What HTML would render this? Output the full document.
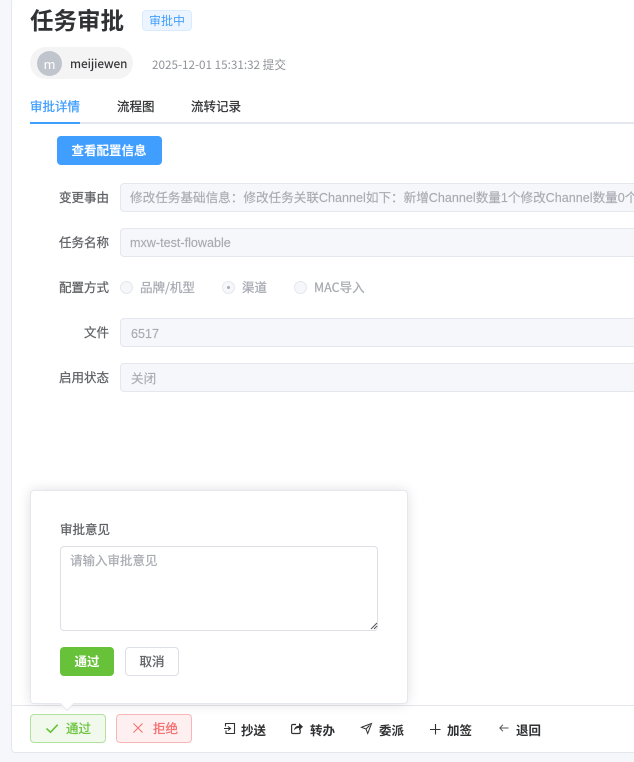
<!DOCTYPE html>
<html lang="zh"><head><meta charset="utf-8">
<style>
*{box-sizing:border-box}
html,body{margin:0;padding:0}
body{width:634px;height:762px;overflow:hidden;background:#f5f7fa;position:relative;font-family:"Noto Sans CJK SC","Liberation Sans",sans-serif;font-size:14px;color:#303133}
.a{position:absolute;white-space:nowrap}
.m{-webkit-text-stroke:.25px currentColor}
.card{left:11px;top:-2px;width:640px;height:755px;background:#fff;border:1px solid #e4e7ed;border-radius:4px}
.lbl{right:525px;font-size:12.5px;line-height:20px;color:#606266;-webkit-text-stroke:.25px #606266}
.inp{left:120px;width:530px;height:29px;background:#f5f7fa;border:1px solid #e4e7ed;border-radius:4px;font:12.6px/28px "Liberation Sans","Noto Sans CJK SC",sans-serif;color:#a8abb2;padding-left:9px;overflow:hidden;-webkit-text-stroke:.15px #a8abb2}
.radio{width:13px;height:13px;border-radius:50%;background:#f5f7fa;border:1px solid #e4e7ed}
.rt{font-size:12.5px;line-height:20px;color:#a8abb2;-webkit-text-stroke:.25px #a8abb2}
.act{font-size:12.5px;line-height:20px;font-weight:700;color:#303133}
svg{position:absolute;overflow:visible;fill:none}
</style></head><body>
<div class="a card"></div>

<div class="a" style="left:30px;top:1px;font-size:23.5px;line-height:36px;font-weight:700;color:#303133">任务审批</div>
<div class="a" style="left:142px;top:10px;width:50px;height:21px;background:#ecf5ff;border:1px solid #d9ecff;border-radius:4px;color:#409eff;font-size:12px;line-height:19px;text-align:center">审批中</div>

<div class="a" style="left:30px;top:47px;width:103px;height:32px;border-radius:16px;background:#f4f4f5"></div>
<div class="a" style="left:37px;top:51px;width:25px;height:25px;border-radius:50%;background:#c0c4cc;color:#fff;font-size:13px;line-height:25px;text-align:center">m</div>
<div class="a" style="left:70px;top:54px;font-size:11.9px;line-height:20px;color:#303133;-webkit-text-stroke:.15px #303133">meijiewen</div>
<div class="a" style="left:152px;top:55px;font-size:11.7px;line-height:20px;color:#909399">2025-12-01 15:31:32 提交</div>

<div class="a m" style="left:30px;top:96px;font-size:12.5px;line-height:20px;color:#409eff">审批详情</div>
<div class="a m" style="left:117px;top:96px;font-size:12.5px;line-height:20px">流程图</div>
<div class="a m" style="left:191px;top:96px;font-size:12.5px;line-height:20px">流转记录</div>
<div class="a" style="left:30px;top:122px;width:610px;height:2px;background:#e4e7ed"></div>
<div class="a" style="left:30px;top:122px;width:50px;height:2px;background:#409eff"></div>

<div class="a" style="left:57px;top:136px;width:105px;height:29px;background:#409eff;border-radius:4px;color:#fff;font-size:12.5px;font-weight:700;line-height:28px;text-align:center;padding-right:1px">查看配置信息</div>

<div class="a lbl" style="top:187px">变更事由</div>
<div class="a inp" style="top:183px">修改任务基础信息：修改任务关联Channel如下：新增Channel数量1个修改Channel数量0个删除Channel数量0个</div>
<div class="a lbl" style="top:232px">任务名称</div>
<div class="a inp" style="top:228px">mxw-test-flowable</div>
<div class="a lbl" style="top:277px">配置方式</div>
<div class="a radio" style="left:120px;top:281px"></div>
<div class="a rt" style="left:140px;top:277px">品牌/机型</div>
<div class="a radio" style="left:222px;top:281px"></div>
<div class="a" style="left:227px;top:286px;width:3px;height:3px;border-radius:50%;background:#a8abb2"></div>
<div class="a rt" style="left:242px;top:277px">渠道</div>
<div class="a radio" style="left:294px;top:281px"></div>
<div class="a rt" style="left:314px;top:277px">MAC导入</div>
<div class="a lbl" style="top:322px">文件</div>
<div class="a inp" style="top:318px;padding-top:1px;padding-left:10px">6517</div>
<div class="a lbl" style="top:367px">启用状态</div>
<div class="a inp" style="top:363px;padding-top:1px;padding-left:10px">关闭</div>

<div class="a" style="left:12px;top:705px;width:630px;height:1px;background:#e4e7ed"></div>

<div class="a" style="left:30px;top:490px;width:378px;height:214px;background:#fff;border:1px solid #e4e7ed;border-radius:4px;box-shadow:0 0 12px rgba(0,0,0,.12)"></div>
<div class="a" style="left:62px;top:699px;width:10px;height:10px;background:#fff;transform:rotate(45deg);border-right:1px solid #e4e7ed;border-bottom:1px solid #e4e7ed"></div>
<div class="a lbl" style="left:60px;right:auto;top:519px">审批意见</div>
<div class="a" style="left:60px;top:546px;width:318px;height:85px;border:1px solid #dcdfe6;border-radius:4px;background:#fff;padding:2px 9px;font-size:12.5px;line-height:21px;color:#a8abb2;-webkit-text-stroke:.2px #a8abb2">请输入审批意见</div>
<svg style="left:370px;top:622px" width="8" height="8"><path d="M1 7 7 1M4 7 7 4" stroke="#555" stroke-width="1"/></svg>
<div class="a" style="left:60px;top:647px;width:54px;height:29px;background:#67c23a;border-radius:4px;color:#fff;font-size:12.5px;font-weight:700;line-height:27px;text-align:center">通过</div>
<div class="a" style="left:125px;top:647px;width:54px;height:29px;background:#fff;border:1px solid #dcdfe6;border-radius:4px;color:#606266;font-size:12.5px;line-height:26px;text-align:center;-webkit-text-stroke:.3px #606266">取消</div>

<div class="a" style="left:30px;top:714px;width:76px;height:29px;background:#f0f9eb;border:1px solid #b3e19d;border-radius:4px"></div>
<svg style="left:46px;top:724px" width="12" height="9"><path d="M.5 4.5 4.5 8.3 11.7.7" stroke="#67c23a" stroke-width="1.6"/></svg>
<div class="a m" style="left:66px;top:718px;font-size:12.5px;line-height:20px;color:#67c23a">通过</div>
<div class="a" style="left:116px;top:714px;width:76px;height:29px;background:#fef0f0;border:1px solid #fab6b6;border-radius:4px"></div>
<svg style="left:133px;top:723px" width="10" height="10"><path d="M.5 .5 9.5 9.5M9.5 .5 .5 9.5" stroke="#f56c6c" stroke-width="1"/></svg>
<div class="a m" style="left:153px;top:718px;font-size:12.5px;line-height:20px;color:#f56c6c">拒绝</div>

<svg style="left:224px;top:723px" width="11" height="11"><path d="M1.5 3.5V.5H10.5V10.5H2V7.5M0 5.5H6M4 3.5 6.5 5.5 4 7.5" stroke="#303133" stroke-width="1.1"/></svg>
<div class="a act" style="left:241px;top:719.5px">抄送</div>
<svg style="left:291px;top:723px" width="12" height="11"><path d="M5 1.5H1.8Q.6 1.5.6 2.7V9.3Q.6 10.5 1.8 10.5H8Q9.2 10.5 9.2 9.3V6.5" stroke="#303133" stroke-width="1.2"/><path d="M3 7.5C3.3 4.2 5.6 2.8 8 2.8V0L12 3.8 8 7.4V5C6 5 4.2 5.8 3 7.5Z" fill="#303133"/></svg>
<div class="a act" style="left:310px;top:719.5px">转办</div>
<svg style="left:361px;top:723px" width="11" height="11"><path d="M10.5.5 .5 4.3 5 6 6.7 10.5ZM5 6 8.5 2.5" stroke="#303133" stroke-width="1"/></svg>
<div class="a act" style="left:379px;top:719.5px">委派</div>
<svg style="left:430px;top:724px" width="11" height="11"><path d="M5.5 0V10.5M0 5.5H10.5" stroke="#303133" stroke-width="1.1"/></svg>
<div class="a act" style="left:447px;top:719.5px">加签</div>
<svg style="left:499px;top:724px" width="10" height="8"><path d="M9.5 4H.8M4 .7 .8 4 4 7.3" stroke="#555" stroke-width="1"/></svg>
<div class="a act" style="left:516px;top:719.5px">退回</div>
</body></html>
